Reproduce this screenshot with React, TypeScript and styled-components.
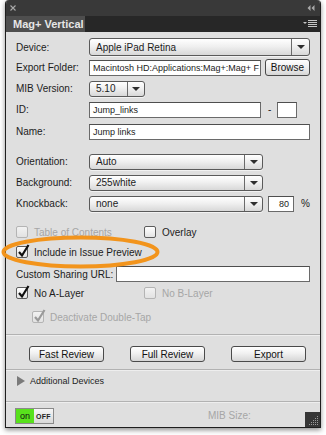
import React from 'react';
import styled, { createGlobalStyle } from 'styled-components';

const Global = createGlobalStyle`
  html, body { margin: 0; padding: 0; background: #ffffff; }
  body { font-family: "Liberation Sans", Arial, sans-serif; color: #1c1c1c; }
  * { box-sizing: border-box; }
`;

const Stage = styled.div`
  position: relative;
  width: 326px;
  height: 435px;
  overflow: hidden;
`;

const Window = styled.div`
  margin-left: 5px;
  width: 316px;
  height: 428px;
  border: 1px solid #1e1e1e;
  border-top: none;
  border-radius: 4px 4px 0 0;
  box-shadow: 0 2px 5px rgba(0, 0, 0, 0.45);
  display: flex;
  flex-direction: column;
  overflow: hidden;
  background: #dfdfdf;
`;

const TitleStrip = styled.div`
  height: 16px;
  background: #393939;
  display: flex;
  align-items: center;
  justify-content: space-between;
  padding: 0 5px 0 4px;
`;

const TabBar = styled.div`
  height: 16px;
  background: #272727;
  display: flex;
  align-items: stretch;
`;

const Tab = styled.div`
  width: 79px;
  background: #4e4e4e;
  color: #e6e6e6;
  font-weight: bold;
  font-size: 11px;
  line-height: 16px;
  padding-left: 7px;
  white-space: nowrap;
`;

const MenuIcon = styled.svg`
  margin: auto 3px auto auto;
`;

const Body = styled.div`
  flex: 1;
  display: flex;
  flex-direction: column;
  padding-top: 6px;
`;

const Row = styled.div<{ $mt?: number; $h?: number; $pl?: number }>`
  display: flex;
  align-items: center;
  height: ${p => p.$h ?? 17}px;
  margin-top: ${p => p.$mt ?? 0}px;
  padding: 0 10px 0 ${p => p.$pl ?? 10}px;
`;

const Label = styled.div<{ $w?: number }>`
  width: ${p => p.$w ?? 73}px;
  flex: none;
  font-size: 10px;
  color: #1c1c1c;
  white-space: nowrap;
`;

const SelectBox = styled.div<{ $w?: number; $h?: number }>`
  ${p => (p.$w ? `width: ${p.$w}px; flex: none;` : 'flex: 1;')}
  height: ${p => p.$h ?? 16}px;
  border: 1px solid #5a5a5a;
  border-radius: 3px;
  background: linear-gradient(#ffffff, #f0f0f0 45%, #d8d8d8);
  display: flex;
  align-items: stretch;
  box-shadow: 0 1px 0 rgba(255, 255, 255, 0.6);
`;

const SelectText = styled.div`
  flex: 1;
  font-size: 10px;
  padding-left: 6px;
  display: flex;
  align-items: center;
  white-space: nowrap;
  overflow: hidden;
`;

const ArrowCell = styled.div<{ $w?: number }>`
  width: ${p => p.$w ?? 18}px;
  border-left: 1px solid #6a6a6a;
  display: flex;
  align-items: center;
  justify-content: center;
  &::after {
    content: '';
    border-left: 4px solid transparent;
    border-right: 4px solid transparent;
    border-top: 4px solid #2e2e2e;
  }
`;

const TextInput = styled.div<{ $w?: number; $right?: boolean; $ml?: number }>`
  ${p => (p.$w ? `width: ${p.$w}px; flex: none;` : 'flex: 1;')}
  margin-left: ${p => p.$ml ?? 0}px;
  height: 16px;
  border: 1px solid #6a6a6a;
  border-top-color: #4e4e4e;
  background: #ffffff;
  font-size: 9px;
  display: flex;
  align-items: center;
  justify-content: ${p => (p.$right ? 'flex-end' : 'flex-start')};
  padding: 0 4px 0 3px;
  white-space: nowrap;
  overflow: hidden;
`;

const Button = styled.div<{ $w?: number; $h?: number; $ml?: number }>`
  width: ${p => p.$w ?? 75}px;
  height: ${p => p.$h ?? 16}px;
  margin-left: ${p => p.$ml ?? 0}px;
  flex: none;
  border: 1px solid #4a4a4a;
  border-radius: 3px;
  background: linear-gradient(#ffffff, #f1f1f1 45%, #d6d6d6);
  font-size: 10px;
  display: flex;
  align-items: center;
  justify-content: center;
  color: #111;
`;

const Unit = styled.div<{ $ml: number }>`
  margin-left: ${p => p.$ml}px;
  font-size: 10px;
  color: #1c1c1c;
`;

const CheckCell = styled.div<{ $w?: number }>`
  display: flex;
  align-items: center;
  gap: 6px;
  ${p => (p.$w ? `width: ${p.$w}px; flex: none;` : '')}
`;

const Box = styled.div<{ $disabled?: boolean }>`
  position: relative;
  width: 12px;
  height: 12px;
  flex: none;
  border: 1px solid ${p => (p.$disabled ? '#b4b4b4' : '#5c5c5c')};
  border-radius: 2px;
  background: ${p =>
    p.$disabled ? 'linear-gradient(#f2f2f2, #e2e2e2)' : 'linear-gradient(#ffffff, #e4e4e4)'};
`;

const CheckMark = styled.svg`
  position: absolute;
  left: 0px;
  top: -3px;
  overflow: visible;
`;

const CheckText = styled.div<{ $disabled?: boolean }>`
  font-size: 10px;
  color: ${p => (p.$disabled ? '#a6a6a6' : '#1c1c1c')};
  white-space: nowrap;
`;

const Separator = styled.div<{ $mt: number }>`
  height: 1px;
  margin-top: ${p => p.$mt}px;
  background: #b2b2b2;
  box-shadow: 0 1px 0 #eeeeee;
`;

const ButtonRow = styled.div<{ $mt: number }>`
  display: flex;
  gap: 26px;
  padding-left: 23px;
  margin-top: ${p => p.$mt}px;
`;

const Disclosure = styled.div<{ $mt: number }>`
  display: flex;
  align-items: center;
  gap: 5px;
  height: 10px;
  margin-top: ${p => p.$mt}px;
  padding-left: 11px;
  font-size: 9px;
  color: #1c1c1c;
  &::before {
    content: '';
    border-top: 5px solid transparent;
    border-bottom: 5px solid transparent;
    border-left: 8px solid #7a7a7a;
  }
`;

const Footer = styled.div`
  flex: 1;
  display: flex;
  align-items: flex-start;
  padding: 6px 0 0 9px;
`;

const Toggle = styled.div`
  display: flex;
  height: 16px;
  border: 1px solid #8a8a8a;
`;

const ToggleOn = styled.div`
  width: 18px;
  background: #58e11c;
  font-size: 9px;
  color: #111;
  display: flex;
  align-items: center;
  justify-content: center;
`;

const ToggleOff = styled.div`
  width: 19px;
  background: linear-gradient(#f6f6f6, #d9d9d9);
  font-size: 7px;
  font-weight: bold;
  color: #222;
  display: flex;
  align-items: center;
  justify-content: center;
  letter-spacing: 0.3px;
`;

const MibSize = styled.div`
  margin-left: auto;
  width: 97px;
  font-size: 10px;
  color: #a6a6a6;
  margin-top: 2px;
`;

const Grip = styled.svg`
  align-self: flex-end;
  flex: none;
  display: block;
`;

const Highlight = styled.svg`
  position: absolute;
  left: 0;
  top: 233px;
  pointer-events: none;
`;

const Check = ({ color = '#111' }: { color?: string }) => (
  <CheckMark width="12" height="14" viewBox="0 0 12 14">
    <path d="M2 8 L5 11.5 L11.5 1" stroke={color} strokeWidth="2.2" fill="none" strokeLinejoin="miter" />
  </CheckMark>
);

const CheckBox = ({
  label,
  checked,
  disabled,
  w,
}: {
  label: string;
  checked?: boolean;
  disabled?: boolean;
  w?: number;
}) => (
  <CheckCell $w={w}>
    <Box $disabled={disabled}>{checked && <Check color={disabled ? '#9a9a9a' : '#111'} />}</Box>
    <CheckText $disabled={disabled}>{label}</CheckText>
  </CheckCell>
);

const Select = ({ value, w, h, aw }: { value: string; w?: number; h?: number; aw?: number }) => (
  <SelectBox $w={w} $h={h}>
    <SelectText>{value}</SelectText>
    <ArrowCell $w={aw} />
  </SelectBox>
);

const gripDots = [
  [12, 4], [12, 6], [10, 6], [12, 8], [10, 8], [8, 8], [12, 10], [10, 10], [8, 10], [6, 10],
  [12, 12], [10, 12], [8, 12], [6, 12], [4, 12],
];

export default function App() {
  return (
    <Stage>
      <Global />
      <Window>
        <TitleStrip>
          <svg width="6" height="6" viewBox="0 0 6 6">
            <path d="M0.5 0.5 L5.5 5.5 M5.5 0.5 L0.5 5.5" stroke="#a9a9a9" strokeWidth="1.1" />
          </svg>
          <svg width="8" height="6" viewBox="0 0 8 6">
            <path d="M3.5 0 L0.5 3 L3.5 6 Z M7.5 0 L4.5 3 L7.5 6 Z" fill="#a9a9a9" />
          </svg>
        </TitleStrip>
        <TabBar>
          <Tab>Mag+ Vertical</Tab>
          <MenuIcon width="14" height="8" viewBox="0 0 14 8">
            <path d="M0 2 L4 2 L2 4 Z" fill="#c4c4c4" />
            <path d="M5 0.5 H14 M5 2.5 H14 M5 4.5 H14 M5 6.5 H14" stroke="#c4c4c4" strokeWidth="1" />
          </MenuIcon>
        </TabBar>
        <Body>
          <Row $h={18}>
            <Label>Device:</Label>
            <Select value="Apple iPad Retina" h={18} />
          </Row>
          <Row $mt={3}>
            <Label>Export Folder:</Label>
            <TextInput $w={172}>Macintosh HD:Applications:Mag+:Mag+ F</TextInput>
            <Button $w={45} $h={17} $ml={4}>Browse</Button>
          </Row>
          <Row $mt={4}>
            <Label>MIB Version:</Label>
            <Select value="5.10" w={56} aw={17} />
          </Row>
          <Row $mt={4}>
            <Label>ID:</Label>
            <TextInput $w={172}>Jump_links</TextInput>
            <Unit $ml={7}>-</Unit>
            <TextInput $w={20} $ml={6} />
          </Row>
          <Row $mt={5}>
            <Label>Name:</Label>
            <TextInput>Jump links</TextInput>
          </Row>
          <Row $mt={13}>
            <Label>Orientation:</Label>
            <Select value="Auto" w={174} />
          </Row>
          <Row $mt={4}>
            <Label>Background:</Label>
            <Select value="255white" w={174} />
          </Row>
          <Row $mt={4}>
            <Label>Knockback:</Label>
            <Select value="none" w={174} />
            <TextInput $w={26} $right $ml={5}>80</TextInput>
            <Unit $ml={7}>%</Unit>
          </Row>
          <Row $mt={13} $h={14}>
            <CheckBox label="Table of Contents" disabled w={128} />
            <CheckBox label="Overlay" />
          </Row>
          <Row $mt={6} $h={14}>
            <CheckBox label="Include in Issue Preview" checked />
          </Row>
          <Row $mt={7} $h={16}>
            <Label $w={100}>Custom Sharing URL:</Label>
            <TextInput />
          </Row>
          <Row $mt={4} $h={14}>
            <CheckBox label="No A-Layer" checked w={128} />
            <CheckBox label="No B-Layer" disabled />
          </Row>
          <Row $mt={10} $h={14} $pl={26}>
            <CheckBox label="Deactivate Double-Tap" checked disabled />
          </Row>
          <Separator $mt={10} />
          <ButtonRow $mt={11}>
            <Button>Fast Review</Button>
            <Button>Full Review</Button>
            <Button>Export</Button>
          </ButtonRow>
          <Separator $mt={7} />
          <Disclosure $mt={6}>Additional Devices</Disclosure>
          <Separator $mt={15} />
          <Footer>
            <Toggle>
              <ToggleOn>on</ToggleOn>
              <ToggleOff>OFF</ToggleOff>
            </Toggle>
            <MibSize>MIB Size:</MibSize>
            <Grip width="15" height="15" viewBox="0 0 15 15">
              <rect width="15" height="15" fill="#363636" />
              {gripDots.map(([x, y]) => (
                <rect key={`${x}-${y}`} x={x} y={y} width="1" height="1" fill="#9a9a9a" />
              ))}
            </Grip>
          </Footer>
        </Body>
      </Window>
      <Highlight width="164" height="40" viewBox="0 0 164 40">
        <ellipse cx="80.5" cy="19" rx="77" ry="14.5" fill="none" stroke="#f2941c" strokeWidth="4" />
      </Highlight>
    </Stage>
  );
}
